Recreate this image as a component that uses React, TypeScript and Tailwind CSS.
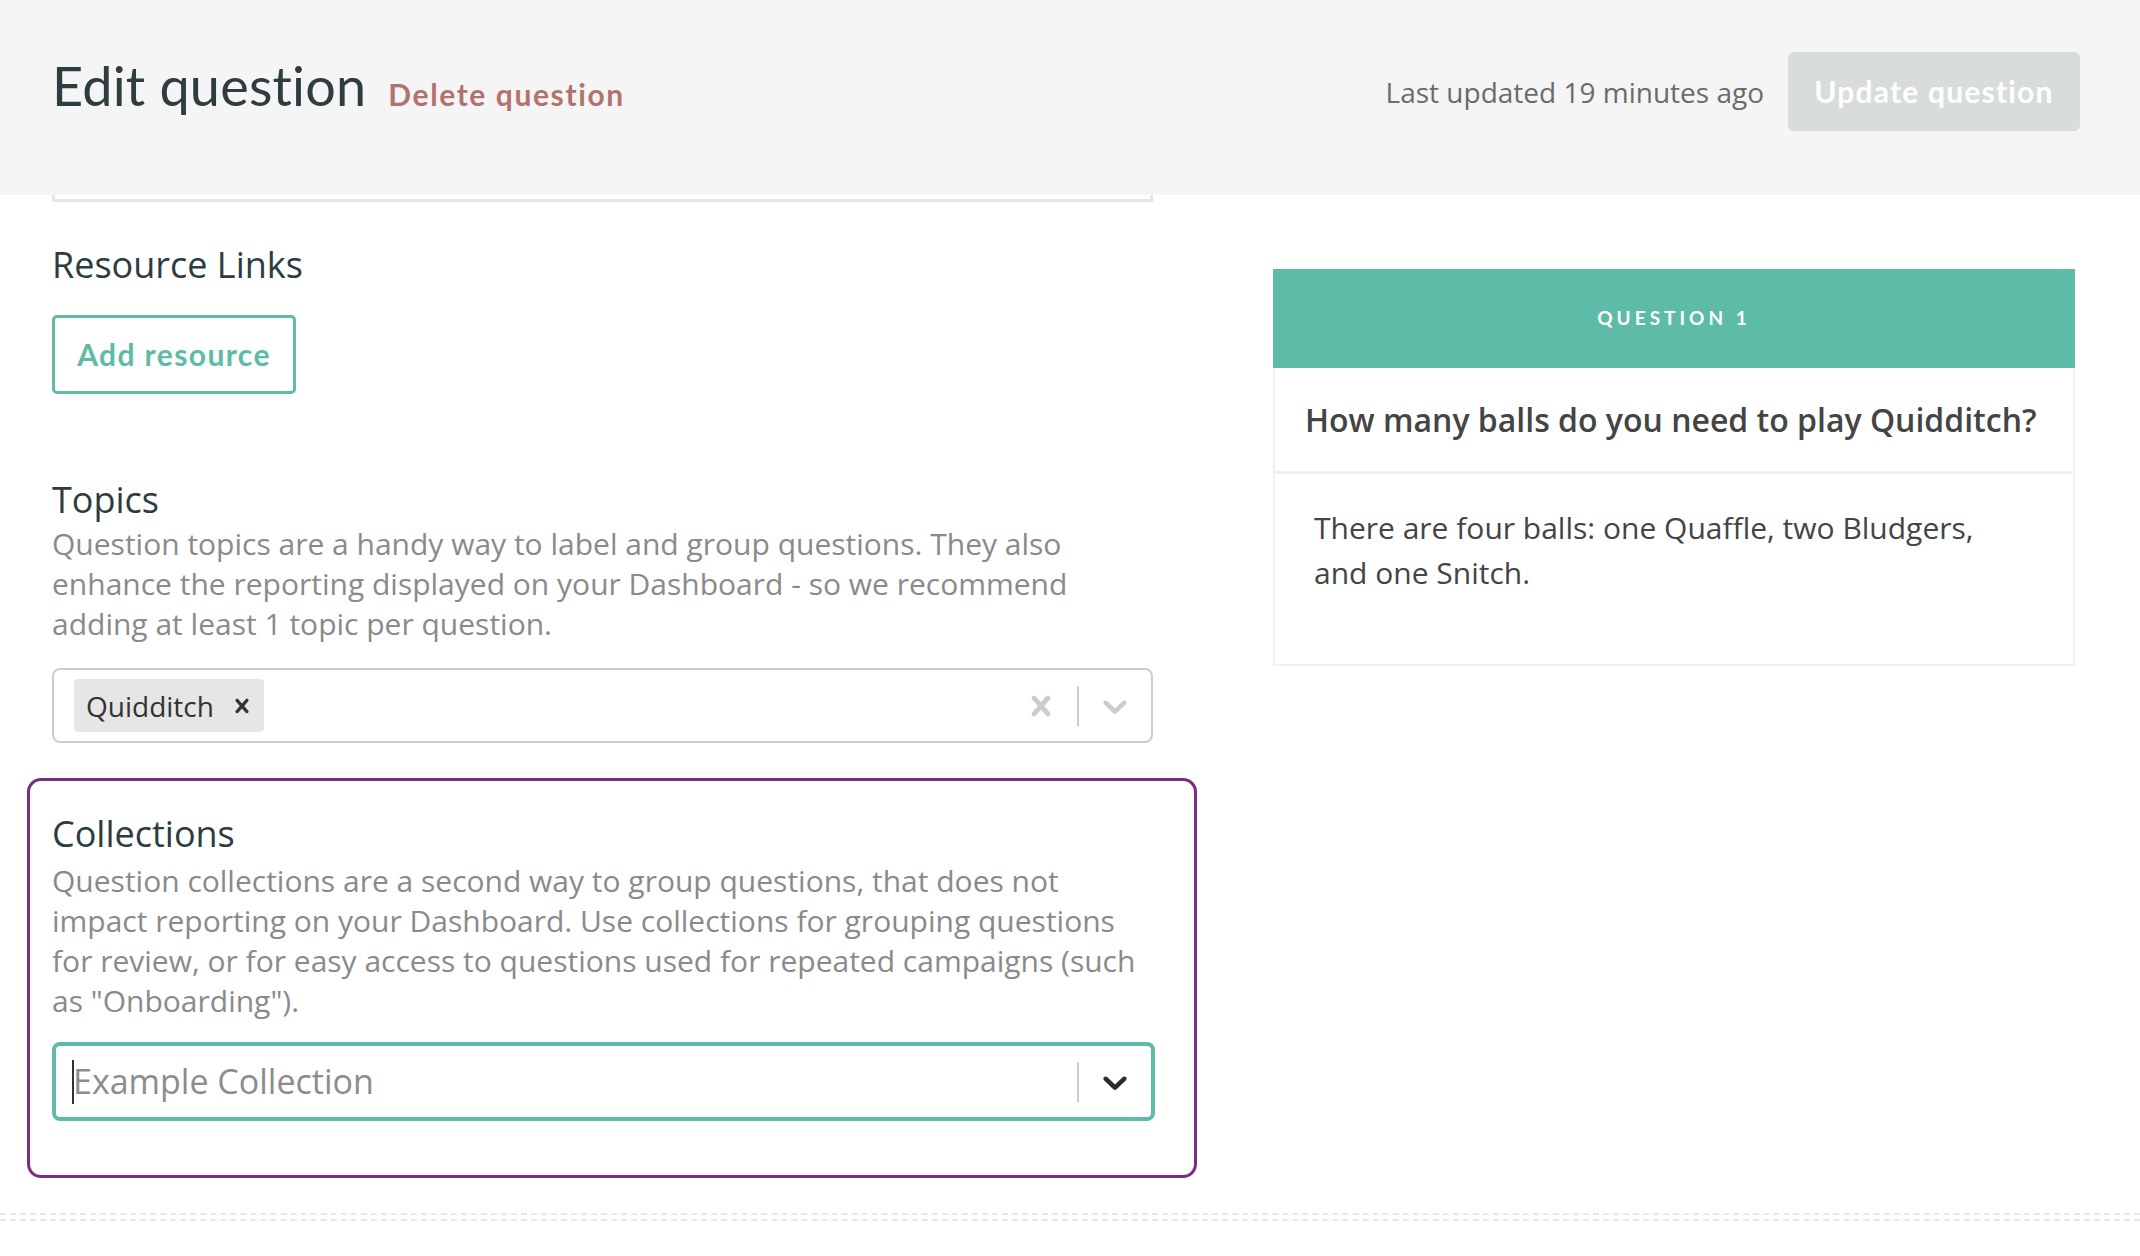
import React from "react";

const crossPath =
    "M14.348 14.849c-0.469 0.469-1.229 0.469-1.697 0l-2.651-3.030-2.651 3.029c-0.469 0.469-1.229 0.469-1.697 0-0.469-0.469-0.469-1.229 0-1.697l2.758-3.15-2.759-3.152c-0.469-0.469-0.469-1.228 0-1.697s1.228-0.469 1.697 0l2.652 3.031 2.651-3.031c0.469-0.469 1.228-0.469 1.697 0s0.469 1.229 0 1.697l-2.758 3.152 2.758 3.15c0.469 0.469 0.469 1.229 0 1.698z";
const chevronPath =
    "M4.516 7.548c0.436-0.446 1.043-0.481 1.576 0l3.908 3.747 3.908-3.747c0.533-0.481 1.141-0.446 1.574 0 0.436 0.445 0.408 1.197 0 1.615-0.406 0.418-4.695 4.502-4.695 4.502-0.217 0.223-0.502 0.335-0.787 0.335s-0.57-0.112-0.789-0.335c0 0-4.287-4.084-4.695-4.502s-0.436-1.17 0-1.615z";

const Icon = ({d, size, className}: { d: string; size: number; className?: string }) => (
    <svg width={size} height={size} viewBox="0 0 20 20" className={className} fill="currentColor">
        <path d={d}/>
    </svg>
);

const heading = "text-[36px] leading-[48px] text-[#2d3c3f] font-['Open_Sans',sans-serif]";
const help = "text-[30px] leading-[40px] text-[#8a8a8a] font-['Open_Sans',sans-serif]";

const App: React.FC = () => {
    return (
        <div className="min-h-screen bg-white font-['Open_Sans',sans-serif]">
            {/* top bar */}
            <div className="h-[195px] bg-[#f5f5f5] flex items-center justify-between pl-[52px] pr-[60px]">
                <div className="flex items-baseline gap-[22px] -mt-[24px]">
                    <h1 className="font-['Lato',sans-serif] text-[54px] text-[#2e3d40] tracking-[0.2px]">Edit question</h1>
                    <a className="font-['Lato',sans-serif] font-bold text-[30px] text-[#b2736f] tracking-[1.6px]">Delete question</a>
                </div>
                <div className="flex items-center gap-[24px] -mt-[12px]">
                    <span className="text-[28px] text-[#6b6b6b]">Last updated 19 minutes ago</span>
                    <button className="h-[79px] w-[292px] rounded-[6px] bg-[#d8dcdb] text-white font-['Lato',sans-serif] font-bold text-[30px] tracking-[1.2px]">
                        Update question
                    </button>
                </div>
            </div>

            <div className="flex pl-[52px]">
                {/* form column */}
                <div className="w-[1101px] flex flex-col">
                    <div className="h-[7px] border-x-[3px] border-b-[3px] border-[#e6e6e6]"/>

                    <div className={`${heading} mt-[39px]`}>Resource Links</div>
                    <button className="mt-[26px] w-[244px] h-[79px] border-[3px] border-[#5dbba7] rounded-[5px] text-[#5dbba7] font-['Lato',sans-serif] font-bold text-[30px] tracking-[1.4px]">
                        Add resource
                    </button>

                    <div className={`${heading} mt-[82px]`}>Topics</div>
                    <p className={help}>
                        Question topics are a handy way to label and group questions. They also enhance the reporting
                        displayed on your Dashboard - so we recommend adding at least 1 topic per question.
                    </p>
                    <div className="mt-[24px] h-[75px] border-2 border-[#cccccc] rounded-[8px] flex items-center pl-[20px]">
                        <div className="flex items-center h-[53px] bg-[#e6e6e6] rounded-[4px] pl-[12px] pr-[8px]">
                            <span className="text-[28px] text-[#333]">Quidditch</span>
                            <span className="ml-[14px] text-[#333] flex items-center"><Icon d={crossPath} size={28}/></span>
                        </div>
                        <div className="flex-1"/>
                        <div className="w-[72px] flex justify-center text-[#cccccc]"><Icon d={crossPath} size={40}/></div>
                        <div className="w-[2px] h-[40px] bg-[#cccccc]"/>
                        <div className="w-[72px] flex justify-center text-[#cccccc]"><Icon d={chevronPath} size={40}/></div>
                    </div>

                    {/* highlighted section */}
                    <div className="mt-[35px] -ml-[25px] w-[1170px] border-[3px] border-[#7c2d80] rounded-[14px] pl-[22px] pr-[39px] pt-[29px] pb-[54px]">
                        <div className={heading}>Collections</div>
                        <p className={`${help} mt-[3px]`}>
                            Question collections are a second way to group questions, that does not impact reporting on
                            your Dashboard. Use collections for grouping questions for review, or for easy access to
                            questions used for repeated campaigns (such as "Onboarding").
                        </p>
                        <div className="mt-[21px] h-[79px] border-[4px] border-[#5dbba7] rounded-[8px] flex items-center pl-[16px]">
                            <div className="w-[2px] h-[44px] bg-[#333]"/>
                            <span className="text-[34px] text-[#8c8c8c] -ml-[1px]">Example Collection</span>
                            <div className="flex-1"/>
                            <div className="w-[2px] h-[40px] bg-[#cccccc]"/>
                            <div className="w-[72px] flex justify-center text-[#2b2b2b]"><Icon d={chevronPath} size={40}/></div>
                        </div>
                    </div>
                </div>

                {/* preview column */}
                <div className="ml-[120px] mt-[74px] w-[802px] self-start border-2 border-[#f1f1f1] border-t-0">
                    <div className="h-[99px] -mx-[2px] bg-[#5dbba7] flex items-center justify-center text-white font-['Lato',sans-serif] font-bold text-[19px] tracking-[4px]">
                        QUESTION 1
                    </div>
                    <div className="h-[106px] flex items-center pl-[30px] border-b-[3px] border-[#f0f0f0] text-[32px] font-semibold text-[#444]">
                        How many balls do you need to play Quidditch?
                    </div>
                    <div className="pl-[39px] pr-[40px] pt-[31px] pb-[69px] text-[30px] leading-[45px] text-[#444]">
                        There are four balls: one Quaffle, two Bludgers, and one Snitch.
                    </div>
                </div>
            </div>

            <div className="mt-[35px] h-[8px] border-y-2 border-dashed border-[#e8e8e8]"/>
        </div>
    );
};

export default App;
